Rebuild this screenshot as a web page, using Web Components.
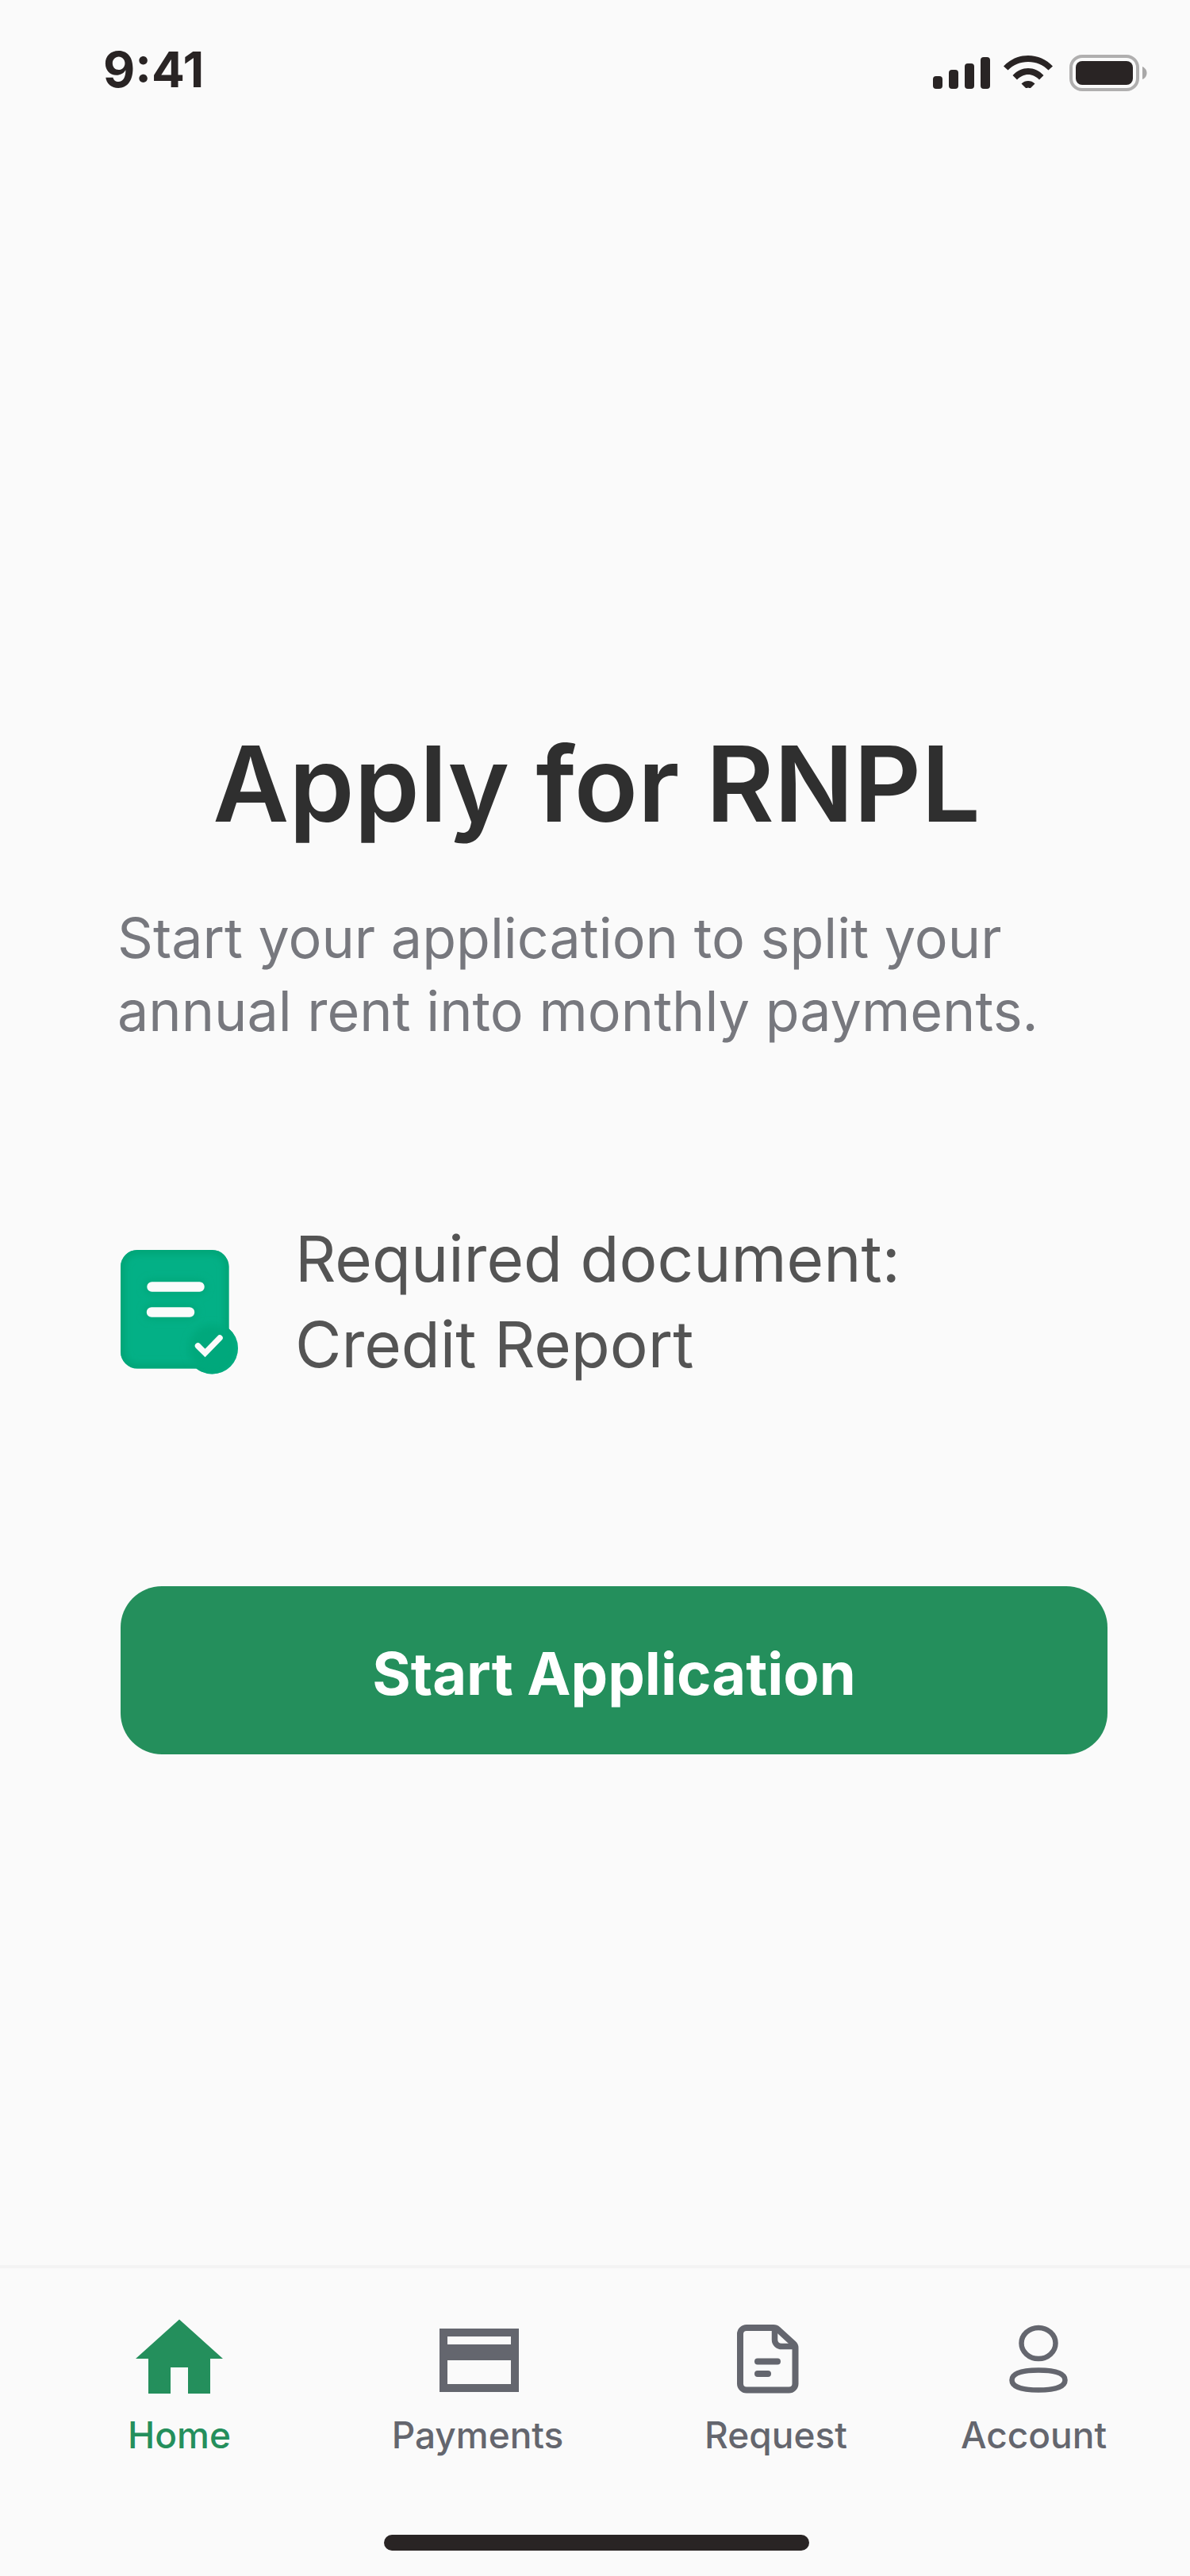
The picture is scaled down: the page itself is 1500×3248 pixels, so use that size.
<!DOCTYPE html>
<html lang="en">
<head>
<meta charset="utf-8">
<meta name="viewport" content="width=device-width, initial-scale=1">
<title>Apply for RNPL</title>
<style>
  html, body { margin: 0; }
  body { background: #fafafa; font-family: Inter, "Liberation Sans", sans-serif; }
</style>
</head>
<body>
<app-screen>
  <status-bar slot="status" time="9:41"></status-bar>
  <apply-panel>
    <span slot="title">Apply for RNPL</span>
    <span slot="intro">Start your application to split your annual rent into monthly payments.</span>
    <required-document slot="documents">
      <span>Required document:</span>
      <span>Credit Report</span>
    </required-document>
    <primary-button slot="action">Start Application</primary-button>
  </apply-panel>
  <tab-bar slot="tabs">
    <tab-item icon="home" active>Home</tab-item>
    <tab-item icon="card">Payments</tab-item>
    <tab-item icon="file">Request</tab-item>
    <tab-item icon="user">Account</tab-item>
  </tab-bar>
</app-screen>

<script>
const define = (name, html, setup) => {
  const template = document.createElement('template');
  template.innerHTML = html;
  customElements.define(name, class extends HTMLElement {
    connectedCallback() {
      if (this.shadowRoot) return;
      const root = this.attachShadow({ mode: 'open' });
      root.append(template.content.cloneNode(true));
      if (setup) setup(this, root);
    }
  });
};

define('app-screen', `
  <style>
    :host { display: flex; flex-direction: column; min-height: 100vh; color: #2f2f2f; }
    main { flex: 1; }
  </style>
  <slot name="status"></slot>
  <main><slot></slot></main>
  <slot name="tabs"></slot>
`);

define('status-bar', `
  <style>
    :host { display: flex; justify-content: space-between; align-items: center; padding: 48px 54px 48px 130px; color: #292424; }
    time { font-size: 62px; line-height: 80px; font-weight: 700; }
    .icons { display: flex; align-items: center; gap: 17px; padding-top: 8px; }
    svg { display: block; }
  </style>
  <time></time>
  <div class="icons">
    <svg width="72" height="40" viewBox="0 0 72 40" fill="currentColor" role="img" aria-label="Signal">
      <rect x="0" y="24" width="12" height="16" rx="4"/><rect x="20" y="16" width="12" height="24" rx="4"/>
      <rect x="40" y="8" width="12" height="32" rx="4"/><rect x="60" y="0" width="12" height="40" rx="4"/>
    </svg>
    <svg width="66" height="48" viewBox="0 0 66 48" fill="currentColor" role="img" aria-label="Wi-Fi">
      <path d="M0 15.500C8 7 19 2 31 2s23 5 31 13.500l-5.500 5C50 14 41 10 31 10S12 14 5.500 20.500Z"/>
      <path d="M11.500 27C17 21 24 18 31 18s14 3 19.500 9L45 32.500C41 28.500 36 26 31 26s-10 2.500-14 6.500Z"/>
      <path d="M22.500 37.500C25 35 28 34 31 34s6 1 8.500 3.500L34 43h-1.500c-1-.7-2-.7-3 0H28Z"/>
    </svg>
    <svg width="98" height="48" viewBox="0 0 98 48" role="img" aria-label="Battery">
      <rect x="2" y="3" width="84" height="42" rx="14" fill="none" stroke="#b0afaf" stroke-width="4"/>
      <rect x="8" y="9" width="72" height="30" rx="8" fill="currentColor"/>
      <path d="M92 16c3 1.500 5.500 4 5.500 8s-2.500 7-5.500 8Z" fill="#a9a8a8"/>
    </svg>
  </div>
`, (host, root) => { root.querySelector('time').textContent = host.getAttribute('time'); });

define('apply-panel', `
  <style>
    :host { display: block; padding: 732px 104px 0 148px; }
    h1 { margin: 0 40px 0 0; text-align: center; font-size: 132px; line-height: 160px; font-weight: 600; color: #2f2f2f; }
    p { margin: 69px 0 0; max-width: 1200px; font-size: 70px; line-height: 92px; color: #77787e; }
    .documents { margin: 212px 0 0 4px; }
    .action { margin: 251px 0 0 4px; }
  </style>
  <h1><slot name="title"></slot></h1>
  <p><slot name="intro"></slot></p>
  <div class="documents"><slot name="documents"></slot></div>
  <div class="action"><slot name="action"></slot></div>
`);

define('required-document', `
  <style>
    :host { display: flex; align-items: flex-end; gap: 72px; color: #545454; font-size: 80px; line-height: 108px; }
    svg { display: block; flex: none; padding-bottom: 16px; }
    .lines { display: flex; flex-direction: column; }
  </style>
  <svg width="148" height="157" viewBox="0 0 148 157" aria-hidden="true">
    <defs>
      <clipPath id="shape"><rect width="136.500" height="149.500" rx="21"/><circle cx="115.500" cy="124" r="32.500"/></clipPath>
      <filter id="soft" x="-20%" y="-20%" width="140%" height="140%"><feGaussianBlur stdDeviation="5"/></filter>
    </defs>
    <g clip-path="url(#shape)">
      <rect width="148" height="157" fill="#03b086"/>
      <g fill="none" stroke="#06a374" filter="url(#soft)">
        <rect width="136.500" height="149.500" rx="21" stroke-width="10"/>
        <path d="M39 46.500h60M39 78.500h48" stroke-width="20" stroke-linecap="round" opacity=".6"/>
      </g>
      <circle cx="115.500" cy="124" r="30" fill="#05a87b" filter="url(#soft)"/>
    </g>
    <g fill="none" stroke="#fbfbfb" stroke-linecap="round">
      <path d="M39.500 46.500h60M39 78.500h48" stroke-width="12.500"/>
      <path d="M97.500 121l9 9 18.500-19" stroke-width="7.500"/>
    </g>
  </svg>
  <div class="lines"><slot></slot></div>
`);

define('primary-button', `
  <style>
    :host { display: block; }
    button { display: block; width: 100%; margin: 0; padding: 60px 24px 52px; border: 0; border-radius: 52px; background: #248f5c; color: #fff;
      font: 700 74px/100px Inter, "Liberation Sans", sans-serif; text-align: center; cursor: pointer; }
  </style>
  <button type="button"><slot></slot></button>
`);

define('tab-bar', `
  <style>
    :host { display: block; border-top: 4px solid #f3f3f3; padding: 60px 0 32px; }
    nav { display: grid; grid-template-columns: 376fr 376fr 376fr 274fr; padding: 0 60px 0 38px; }
    .bottom { display: flex; justify-content: center; padding: 96px 0 0 4px; }
    .indicator { width: 536px; max-width: 60%; height: 20px; border-radius: 10px; background: #292424; }
  </style>
  <nav aria-label="Main"><slot></slot></nav>
  <div class="bottom"><div class="indicator"></div></div>
`);

const icons = {
  home: '<path fill="currentColor" d="M60 4.500 115 54H99v44H71V65H49v33H21V54H5Z"/>',
  card: '<path fill="currentColor" fill-rule="evenodd" d="M12 16h100v80H12ZM22 26v10h80V26ZM22 56v30h80V56Z"/>',
  file: '<g fill="none" stroke="currentColor" stroke-width="8" stroke-linecap="round" stroke-linejoin="round"><path d="M23 15h34c2 0 4 .8 5.500 2.200L82 35c1.600 1.500 2.500 3 2.500 5v45.500a8 8 0 0 1-8 8H23a8 8 0 0 1-8-8V23a8 8 0 0 1 8-8Z"/><path stroke-width="7.500" stroke-linecap="butt" d="M58.500 16v14c0 5 4 8.500 9 8.500H83"/><path d="M37 57.500h25M37 73h13"/></g>',
  user: '<g fill="none" stroke="currentColor" stroke-width="6.500"><ellipse cx="66" cy="34.500" rx="21.500" ry="19.500"/><path d="M66 68.500C82 68.500 99.500 71 99.500 81S82 93.500 66 93.500 32.500 91 32.500 81 50 68.500 66 68.500Z"/></g>'
};

define('tab-item', `
  <style>
    :host { display: flex; justify-content: center; }
    a { display: flex; flex-direction: column; align-items: center; gap: 16px; color: #64666e; text-decoration: none; font-size: 46px; line-height: 60px; font-weight: 500; }
    :host([active]) a { color: #248f5c; }
    svg { display: block; }
  </style>
  <a href="#"><svg width="120" height="104" viewBox="0 0 120 104" aria-hidden="true"></svg><span><slot></slot></span></a>
`, (host, root) => {
  root.querySelector('svg').innerHTML = icons[host.getAttribute('icon')];
  if (host.hasAttribute('active')) root.querySelector('a').setAttribute('aria-current', 'page');
});
</script>
</body>
</html>
